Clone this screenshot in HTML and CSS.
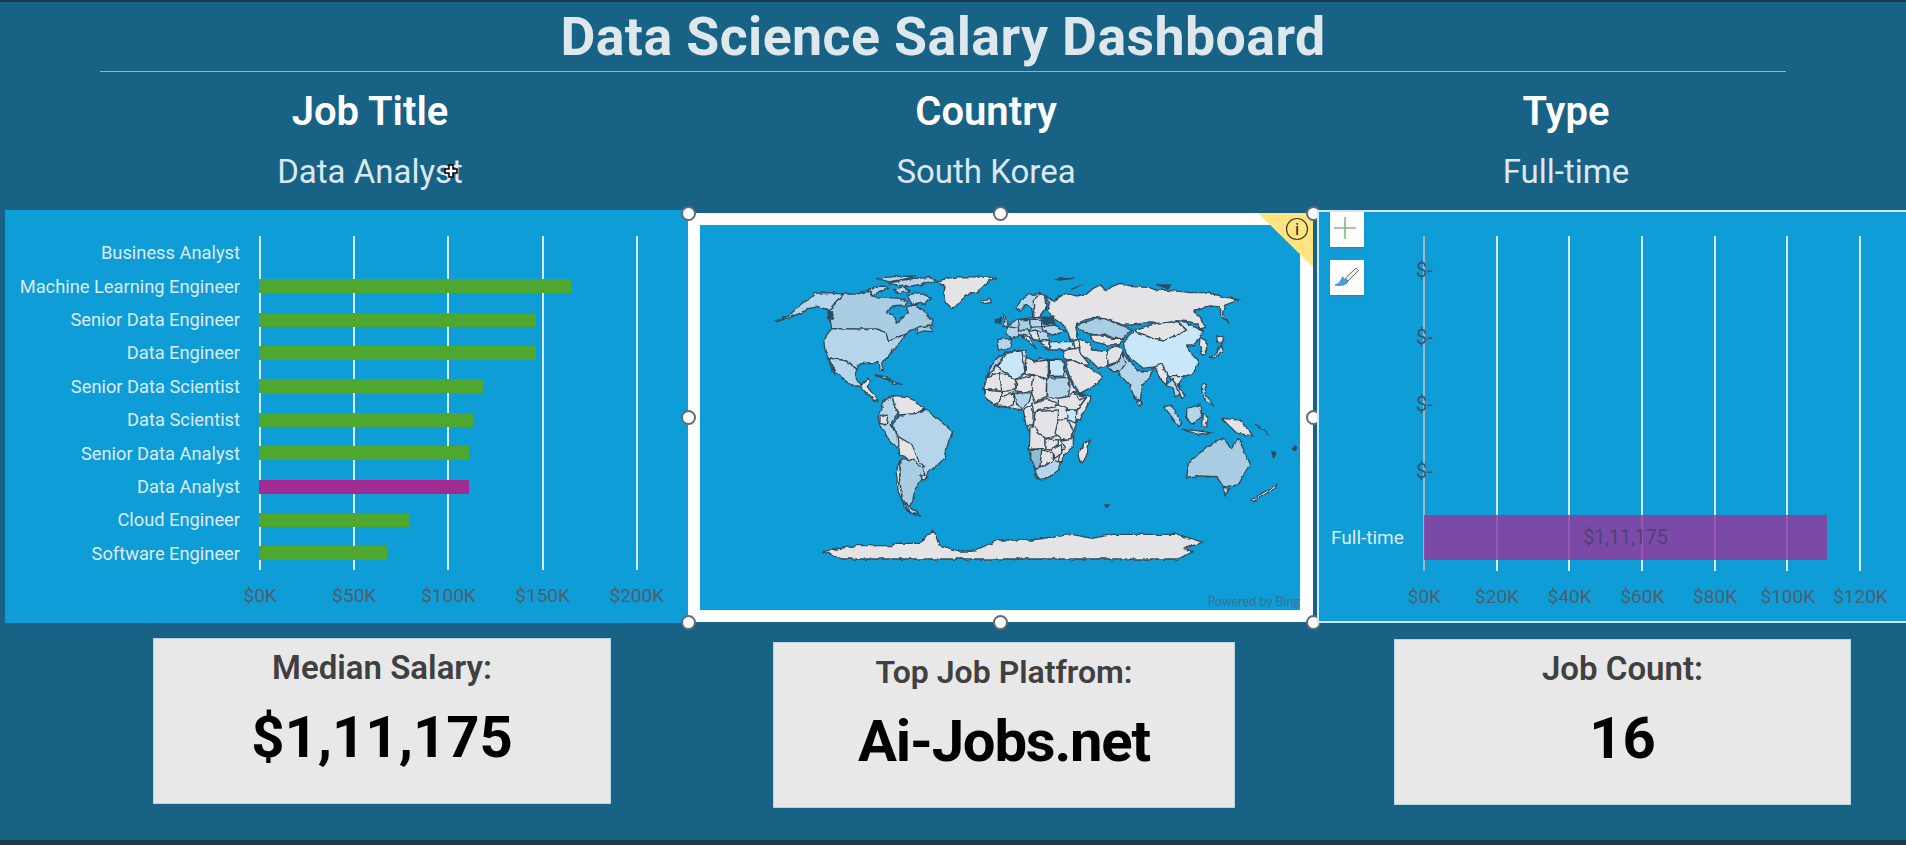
FILE: index.html
```html
<!DOCTYPE html>
<html lang="en">
<head>
    <meta charset="UTF-8">
    <title>Data Science Salary Dashboard</title>
    <link rel="stylesheet" href="styles.css">
</head>
<body>

<div class="page">
    <h1 class="title">Data Science Salary Dashboard</h1>
    <div class="rule"></div>

    <!-- Slicer headings -->
    <div class="filters">
        <div class="filter">
            <div class="filter-name">Job Title</div>
            <div class="filter-value">Data Analyst</div>
        </div>
        <div class="filter">
            <div class="filter-name">Country</div>
            <div class="filter-value">South Korea</div>
        </div>
        <div class="filter">
            <div class="filter-name">Type</div>
            <div class="filter-value">Full-time</div>
        </div>
    </div>

    <!-- Cursor sits over the slicer text -->
    <svg class="cursor" width="14" height="14" viewBox="0 0 14 14">
        <path d="M5 1h4v4h4v4H9v4H5V9H1V5h4z" fill="#fff" stroke="#000" stroke-width="1.5"/>
    </svg>

    <div class="charts">
        <!-- Salary by job title -->
        <div class="panel panel-jobs">
            <div class="chart">
                <div class="labels">
                    <div class="label">Business Analyst</div>
                    <div class="label">Machine Learning Engineer</div>
                    <div class="label">Senior Data Engineer</div>
                    <div class="label">Data Engineer</div>
                    <div class="label">Senior Data Scientist</div>
                    <div class="label">Data Scientist</div>
                    <div class="label">Senior Data Analyst</div>
                    <div class="label">Data Analyst</div>
                    <div class="label">Cloud Engineer</div>
                    <div class="label">Software Engineer</div>
                </div>
                <div class="plot plot-jobs">
                    <div class="row"></div>
                    <div class="row"><div class="bar" style="width: 312px"></div></div>
                    <div class="row"><div class="bar" style="width: 277px"></div></div>
                    <div class="row"><div class="bar" style="width: 277px"></div></div>
                    <div class="row"><div class="bar" style="width: 224px"></div></div>
                    <div class="row"><div class="bar" style="width: 214px"></div></div>
                    <div class="row"><div class="bar" style="width: 210px"></div></div>
                    <div class="row"><div class="bar bar-selected" style="width: 210px"></div></div>
                    <div class="row"><div class="bar" style="width: 150px"></div></div>
                    <div class="row"><div class="bar" style="width: 128px"></div></div>
                </div>
            </div>
            <div class="ticks ticks-jobs">
                <span>$0K</span><span>$50K</span><span>$100K</span><span>$150K</span><span>$200K</span>
            </div>
        </div>

        <!-- Map, selected on the sheet -->
        <div class="map-frame">
            <div class="map-inner">
                <svg class="map" width="600" height="385" viewBox="700 225 600 385">
                    <defs>
                        <filter id="rough" filterUnits="userSpaceOnUse" x="700" y="225" width="600" height="385">
                            <feTurbulence type="fractalNoise" baseFrequency=".16" numOctaves="2" seed="4" result="noise"/>
                            <feDisplacementMap in="SourceGraphic" in2="noise" scale="4" xChannelSelector="R" yChannelSelector="G"/>
                            <feGaussianBlur stdDeviation=".3"/>
                        </filter>
                    </defs>
                    <g filter="url(#rough)">
                    <!-- North America -->
                    <g transform="translate(760 270) scale(.3333)">
                        <polygon class="c1" points="110,115 130,100 150,85 165,70 205,68 248,72 206,122 200,118 175,110 150,115 125,128 90,142 50,155 88,136"/>
                        <polygon class="c2" points="248,72 290,72 325,65 340,80 375,82 420,85 445,95 435,105 395,108 378,128 400,135 412,160 422,145 445,130 440,110 465,105 490,120 515,150 518,165 505,168 475,170 455,180 440,190 385,215 378,190 355,178 215,176 206,122"/>
                        <polygon class="c1" points="215,176 355,178 378,190 385,215 440,190 415,220 400,240 385,262 365,280 370,298 362,300 352,278 330,278 300,282 290,298 270,280 250,270 225,268 205,262 195,240 192,220 200,195"/>
                        <polygon class="c1" points="325,62 345,50 375,48 385,55 350,70 335,78"/>
                        <polygon class="c1" points="385,40 430,30 470,25 510,22 530,35 490,42 440,50"/>
                        <polygon class="c1" points="440,75 480,68 515,85 495,105 480,100 460,105"/>
                        <polygon class="c1" points="400,60 430,50 450,62 420,72"/>
                        <polygon class="c1" points="350,25 400,20 470,18 430,28 385,35"/>
                        <polygon class="c0" points="530,35 560,25 600,20 710,22 680,38 655,65 620,75 600,95 578,118 560,100 550,70 555,50"/>
                        <polygon class="c0" points="662,95 690,88 695,97 670,102"/>
                        <polygon class="c4" points="204,122 214,122 218,148 206,145"/>
                        <polygon class="c2" points="475,170 512,170 520,185 490,183 470,190"/>
                        <polygon class="c1" points="205,262 225,268 250,270 270,280 290,298 285,320 300,345 320,330 328,328 310,352 275,345 245,325 225,300 210,275"/>
                        <polygon class="c1" points="205,265 222,300 225,315 212,290"/>
                        <polygon class="c0" points="300,347 325,325 332,335 322,350 340,375 358,395 340,390 320,370"/>
                        <polygon class="c2" points="345,315 375,320 400,335 370,325"/>
                        <polygon class="c0" points="395,335 425,340 400,343"/>
                    </g>

                    <!-- South America and Antarctica -->
                    <g transform="translate(680 205) scale(.408 .3333)">
                        <polygon class="c1" points="497,590 520,572 525,600 535,625 515,660 540,700 530,730 510,700 490,660 485,640"/>
                        <polygon class="c1" points="540,630 580,620 605,615 640,650 668,680 655,720 650,760 610,800 600,825 590,790 570,750 535,695 520,660"/>
                        <polygon class="c0" points="520,572 560,575 600,610 580,625 540,630 525,600"/>
                        <polygon class="c0" points="535,695 570,720 585,770 600,785 590,785 550,755 538,750"/>
                        <polygon class="c2" points="542,760 570,765 595,790 600,810 575,855 570,890 560,905 590,930 565,925 545,880 538,830"/>
                        <polygon class="c0" points="540,760 538,830 545,880 565,925 580,935 555,915 535,860 530,800"/>
                        <polygon class="c0" points="590,808 608,815 595,828"/>
                        <polygon class="c0" points="490,635 510,630 505,660 490,655"/>
                        <polygon class="c0" points="350,1040 430,1022 520,1022 528,1015 590,1015 605,990 622,975 635,1020 680,1038 720,1038 780,1005 860,1005 960,988 1010,1000 1060,988 1220,988 1282,1012 1235,1030 1258,1040 1220,1062 395,1062"/>
                    </g>

                    <!-- Russia and Asia -->
                    <g transform="translate(1040 270) scale(.3333)">
                        <polygon class="c0" points="15,75 40,95 60,80 85,72 105,78 140,72 160,55 180,45 200,62 215,50 240,40 280,50 320,52 350,60 400,62 450,68 490,68 520,72 560,82 600,90 575,98 555,105 548,125 565,160 548,140 535,110 510,108 490,112 462,125 480,140 497,175 480,180 470,160 445,155 410,152 370,162 320,158 275,165 250,165 190,145 160,142 110,160 108,175 115,205 90,210 85,190 70,165 40,145 20,120 30,100"/>
                        <polygon class="c2" points="110,165 160,148 190,145 240,165 275,180 250,205 220,205 190,190 165,195 145,190 115,175"/>
                        <polygon class="c0" points="150,195 190,195 220,208 250,208 235,225 200,225 160,215"/>
                        <polygon class="c0" points="115,205 150,222 155,240 200,245 205,285 175,295 150,270 120,250"/>
                        <polygon class="c3" points="28,215 100,215 105,235 60,240 30,240"/>
                        <polygon class="c0" points="100,215 115,205 120,235 105,235"/>
                        <polygon class="c0" points="70,240 115,235 125,255 150,285 130,285 95,268 75,270"/>
                        <polygon class="c0" points="75,275 95,270 130,285 160,300 190,320 165,345 120,370 100,340 85,310"/>
                        <polygon class="c0" points="200,240 235,225 250,245 235,275 205,285"/>
                        <polygon class="c2" points="205,290 232,278 250,250 262,278 245,305 215,305"/>
                        <polygon class="c1" points="247,250 268,268 290,300 325,305 345,290 330,320 305,345 298,392 285,385 268,345 245,320 235,310 258,280"/>
                        <polygon class="c0" points="285,178 350,160 410,155 440,180 415,195 375,210 340,205 290,190"/>
                        <polygon class="c3" points="250,220 285,178 290,190 340,205 375,210 415,195 440,180 410,152 440,160 490,185 480,205 460,225 440,225 455,250 475,280 460,310 430,320 390,320 350,290 310,295 260,255"/>
                        <polygon class="c0" points="480,205 498,215 500,250 488,252 478,225"/>
                        <polygon class="c1" points="505,265 530,250 540,225 548,245 525,262"/>
                        <polygon class="c0" points="530,198 552,205 545,222 532,215"/>
                        <polygon class="c0" points="345,290 365,282 385,320 378,345 360,325"/>
                        <polygon class="c1" points="378,345 410,315 425,370 405,380 400,355"/>
                        <polygon class="c0" points="390,320 430,320 415,345 435,380 425,385 410,345"/>
                        <polygon class="c1" points="372,410 395,405 425,462 415,470 395,440"/>
                        <polygon class="c0" points="425,478 470,482 520,490 470,492"/>
                        <polygon class="c1" points="440,415 480,405 485,440 460,462 440,445"/>
                        <polygon class="c0" points="490,430 505,445 498,470 488,472"/>
                        <polygon class="c1" points="485,342 497,345 495,370 520,405 497,392 485,365"/>
                        <polygon class="c0" points="545,445 600,450 640,498 595,490 570,470"/>
                        <polygon class="c2" points="440,625 445,580 500,530 550,505 575,535 595,505 630,580 595,645 550,650 530,620 480,618"/>
                        <polygon class="c1" points="548,652 570,655 555,675"/>
                        <polygon class="c0" points="630,692 712,642 705,655 640,695"/>
                        <polygon class="c1" points="292,392 305,395 302,408 295,405"/>
                        <polygon class="c0" points="90,60 128,42 100,56"/>
                        <polygon class="c4" points="645,462 692,495 660,472"/>
                        <polygon class="c4" points="695,545 708,550 700,560"/>
                        <polygon class="c4" points="758,538 772,530 765,542"/>
                        <polygon class="c4" points="45,27 100,25 60,30"/>
                        <polygon class="c4" points="350,45 395,45 385,55"/>
                        <polygon class="c4" points="195,705 208,705 200,712"/>
                    </g>

                    <!-- Europe and Africa -->
                    <g transform="translate(990 290) scale(.3333)">
                        <polygon class="c0" points="20,205 48,188 95,180 108,185 105,200 135,213 150,205 175,208 218,212 225,240 245,280 262,312 275,320 305,318 285,360 262,395 252,420 250,465 225,490 215,518 190,550 150,568 140,565 132,530 115,478 122,430 110,405 105,375 95,360 50,352 15,348 0,335 -15,322 -20,300 -10,262"/>
                        <polygon class="c2" points="20,205 48,190 50,205 20,225 -10,262 0,235"/>
                        <polygon class="c3" points="50,190 95,182 100,205 105,250 80,268 65,262 22,228"/>
                        <polygon class="c0" points="-10,262 28,245 50,262 35,300 -18,300"/>
                        <polygon class="c0" points="28,245 65,262 80,270 75,300 35,305 35,300"/>
                        <polygon class="c0" points="108,205 135,215 175,210 175,268 130,255 105,250"/>
                        <polygon class="c3" points="178,210 218,212 225,258 178,260"/>
                        <polygon class="c1" points="170,265 235,262 240,290 235,320 205,325 170,320"/>
                        <polygon class="c0" points="80,268 130,255 130,300 100,310 78,305"/>
                        <polygon class="c0" points="132,255 170,268 168,320 135,335 125,310"/>
                        <polygon class="c0" points="-18,300 35,305 35,325 15,345 0,335 -15,322"/>
                        <polygon class="c0" points="35,320 72,308 70,345 50,350 20,348"/>
                        <polygon class="c1" points="72,310 125,308 118,335 95,358 80,340"/>
                        <polygon class="c0" points="125,340 170,325 205,345 175,355 130,365"/>
                        <polygon class="c0" points="205,325 235,320 250,305 270,330 290,320 262,360 235,360 205,345"/>
                        <polygon class="c0" points="250,305 305,320 270,390 255,395 262,360 290,322"/>
                        <polygon class="c0" points="100,360 128,345 130,405 108,405"/>
                        <polygon class="c0" points="135,365 205,360 205,395 195,440 165,445 130,410"/>
                        <polygon class="c3" points="228,360 260,362 258,400 232,388"/>
                        <polygon class="c0" points="205,390 232,388 250,420 245,450 210,445 195,430"/>
                        <polygon class="c0" points="120,412 130,410 165,445 165,475 118,478"/>
                        <polygon class="c0" points="165,445 205,450 205,465 185,480 165,478"/>
                        <polygon class="c0" points="210,450 250,445 250,470 225,490 215,515 205,515 210,490 225,470"/>
                        <polygon class="c5" points="115,478 155,478 155,500 150,535 135,535"/>
                        <polygon class="c0" points="155,480 190,490 190,510 170,525 150,530"/>
                        <polygon class="c0" points="185,478 215,468 215,490 195,505"/>
                        <polygon class="c1" points="135,540 155,530 170,525 190,510 210,518 205,540 175,565 145,568"/>
                        <polygon class="c0" points="298,448 292,490 272,518 265,500 272,475"/>

                        <polygon class="c1" points="50,112 85,88 155,80 190,85 195,105 225,125 190,135 165,128 180,150 175,180 150,155 130,145 115,140 90,135"/>
                        <polygon class="c1" points="40,70 55,100 60,108 38,110 42,90"/>
                        <polygon class="c4" points="15,90 32,85 30,100 18,100"/>
                        <polygon class="c1" points="75,55 110,15 150,10 165,25 168,50 150,80 130,85 125,55 105,45 90,65"/>
                        <polygon class="c0" points="130,30 150,12 165,25 168,50 150,78 132,82"/>
                        <polygon class="c1" points="20,148 65,145 60,170 40,180 25,180"/>
                        <polygon class="c1" points="55,110 85,115 85,140 65,145 50,130"/>
                        <polygon class="c2" points="85,90 120,88 120,120 90,120"/>
                        <polygon class="c1" points="120,88 155,88 155,110 120,112"/>
                        <polygon class="c4" points="155,80 190,85 190,100 160,102"/>
                        <polygon class="c1" points="155,110 195,105 225,125 190,135 160,125"/>
                        <polygon class="c0" points="95,135 115,140 140,175 120,160"/>
                        <polygon class="c0" points="115,125 140,120 150,155 130,145"/>
                        <polygon class="c1" points="140,122 165,125 180,150 165,152 150,155"/>
                        <polygon class="c0" points="150,155 178,150 175,180"/>
                    </g>
                    </g>
                </svg>
            </div>
            <div class="bing">Powered by Bing</div>
            <svg class="info" width="55" height="54" viewBox="0 0 55 54">
                <polygon points="0,0 55,0 55,54" fill="#ffe581"/>
                <circle cx="39" cy="16" r="10.500" fill="none" stroke="#3c3a26" stroke-width="1.200"/>
                <text x="39" y="22" text-anchor="middle" font-size="17" font-family="Roboto" fill="#222">i</text>
            </svg>
            <span class="handle h-tl"></span><span class="handle h-tc"></span><span class="handle h-tr"></span>
            <span class="handle h-ml"></span><span class="handle h-mr"></span>
            <span class="handle h-bl"></span><span class="handle h-bc"></span><span class="handle h-br"></span>
        </div>

        <!-- Salary by type -->
        <div class="panel panel-type">
            <div class="chart-btn btn-plus">
                <svg width="34" height="35" viewBox="0 0 34 35"><path d="M15 5v22M4 16h22" stroke="#7fb98c" stroke-width="1.600" fill="none"/></svg>
            </div>
            <div class="chart-btn btn-brush">
                <svg width="34" height="35" viewBox="0 0 34 35">
                    <path d="M15.500 18 26 8l2.500 2.500L18 21z" fill="#f2f2f2" stroke="#666" stroke-width="1"/>
                    <path d="M12.500 17l5.500 5c-2 3-8 4-13 3 4-1 6-4 7.500-8z" fill="#4b9fe3" stroke="#2f74b5" stroke-width=".8"/>
                </svg>
            </div>
            <div class="chart">
                <div class="labels labels-type">
                    <div class="label"></div>
                    <div class="label"></div>
                    <div class="label"></div>
                    <div class="label"></div>
                    <div class="label">Full-time</div>
                </div>
                <div class="plot plot-type">
                    <div class="row row-type"><span class="blank">$-</span></div>
                    <div class="row row-type"><span class="blank">$-</span></div>
                    <div class="row row-type"><span class="blank">$-</span></div>
                    <div class="row row-type"><span class="blank">$-</span></div>
                    <div class="row row-type"><div class="bar-type" style="width: 403px">$1,11,175</div></div>
                </div>
            </div>
            <div class="ticks ticks-type">
                <span>$0K</span><span>$20K</span><span>$40K</span><span>$60K</span><span>$80K</span><span>$100K</span><span>$120K</span>
            </div>
        </div>
    </div>

    <!-- KPI cards -->
    <div class="kpis">
        <div class="kpi kpi-salary">
            <div class="kpi-label">Median Salary:</div>
            <div class="kpi-value">$1,11,175</div>
        </div>
        <div class="kpi kpi-platform">
            <div class="kpi-label">Top Job Platfrom:</div>
            <div class="kpi-value">Ai-Jobs.net</div>
        </div>
        <div class="kpi kpi-count">
            <div class="kpi-label">Job Count:</div>
            <div class="kpi-value">16</div>
        </div>
    </div>
</div>

</body>
</html>
```

FILE: styles.css
```css
body {
    margin: 0;
    background-color: #1b3b49;
    font-family: Roboto, Arial, sans-serif;
    height: 845px;
    overflow: hidden;
}

.page {
    position: relative;
    height: 838px;
    background-color: #186285;
    border-top: 2px solid #17384a;
}

.title {
    margin: 0;
    height: 69px;
    padding-right: 20px;
    line-height: 70px;
    text-align: center;
    font-size: 53.700px;
    font-weight: 700;
    letter-spacing: .4px;
    color: #dde7ec;
}

.rule {
    height: 1px;
    margin: 0 120px 0 100px;
    background-color: #8fb5c9;
}

.filters {
    display: grid;
    grid-template-columns: 740px 492px 668px;
    margin-top: 15px;
    text-align: center;
}

.filter-name {
    font-size: 40px;
    font-weight: 600;
    line-height: 50px;
    color: #fff;
}

.filter-value {
    margin-top: 11px;
    font-size: 33px;
    font-weight: 400;
    line-height: 48px;
    color: #d9e8f1;
}

.cursor {
    position: absolute;
    left: 444px;
    top: 162px;
}

.charts {
    display: flex;
    margin-top: 14px;
    padding-left: 5px;
}

.panel {
    position: relative;
    height: 413px;
    background-color: #0f9dd8;
    box-sizing: border-box;
    padding-top: 26px;
}

.panel-jobs {
    width: 683px;
}

.panel-type {
    flex: 1;
    margin-left: 4px;
    border: 2px solid #cfe8f5;
    border-right: none;
    padding-top: 24px;
}

.chart {
    display: flex;
}

.labels {
    width: 235px;
    margin-right: 19px;
    display: flex;
    flex-direction: column;
}

.labels-type {
    width: 92px;
    margin-right: 0;
    padding-left: 12px;
}

.label {
    flex: 1;
    display: flex;
    align-items: center;
    justify-content: flex-end;
    font-size: 18.300px;
    color: #dcecf5;
    white-space: nowrap;
}

.labels-type .label {
    justify-content: flex-start;
    font-size: 19px;
}

.plot {
    display: flex;
    flex-direction: column;
    height: 334px;
}

.plot-jobs {
    width: 400px;
    background-image: repeating-linear-gradient(to right, #d6edf8 0, #d6edf8 2px, transparent 2px, transparent 94.200px);
}

.plot-type {
    width: 440px;
    height: 335px;
    background-image:
        linear-gradient(#9fb6c4, #9fb6c4),
        repeating-linear-gradient(to right, #d6edf8 0, #d6edf8 2px, transparent 2px, transparent 72.700px);
    background-size: 2px 100%, 100% 100%;
    background-repeat: no-repeat;
}

.row {
    flex: 1;
    display: flex;
    align-items: center;
}

.bar {
    height: 14px;
    background-color: #4ea72e;
}

.bar-selected {
    background-color: #a02b93;
}

.bar-type {
    height: 45px;
    margin-left: 1px;
    background-color: rgba(142, 60, 160, .85);
    display: flex;
    align-items: center;
    justify-content: center;
    font-size: 19.500px;
    color: #4b4470;
}

.blank {
    margin-left: -7px;
    font-size: 20px;
    color: #3f5266;
}

.ticks {
    display: flex;
    margin-top: 14px;
    font-size: 19px;
    color: #4f5d6d;
}

.ticks span {
    text-align: center;
    line-height: 24px;
}

.ticks-jobs {
    padding-left: 208px;
}

.ticks-jobs span {
    width: 94.200px;
}

.ticks-type {
    padding-left: 69px;
}

.ticks-type span {
    width: 72.700px;
}

.chart-btn {
    position: absolute;
    left: 11px;
    width: 34px;
    height: 35px;
    background-color: #fff;
    box-shadow: 0 1px 1px #5d7484;
}

.chart-btn svg {
    display: block;
}

.btn-plus {
    top: 0;
}

.btn-brush {
    top: 48px;
}

.map-frame {
    position: relative;
    width: 625px;
    height: 409px;
    margin-top: 3px;
    box-sizing: border-box;
    padding: 12px 13px 12px 12px;
    background-color: #fff;
}

.map-inner {
    width: 600px;
    height: 385px;
    background-color: #0f9dd8;
    box-shadow: 0 0 1px #bfe4f5;
}

.map {
    display: block;
}

.map polygon {
    vector-effect: non-scaling-stroke;
    stroke: #33495a;
    stroke-width: 1.300px;
    stroke-linejoin: round;
}

.c0 { fill: #e4e4e6; }
.c1 { fill: #b5d6ea; }
.c2 { fill: #a9cde2; }
.c3 { fill: #c8e7f8; }
.c4 { fill: #1c5270; }
.c5 { fill: #8fbbd4; }

.bing {
    position: absolute;
    right: 13px;
    bottom: 13px;
    font-family: Lato, sans-serif;
    font-size: 12.500px;
    color: #3f6f8e;
}

.info {
    position: absolute;
    right: 0;
    top: 0;
}

.handle {
    position: absolute;
    width: 11px;
    height: 11px;
    margin: -7.500px 0 0 -7.500px;
    border: 2px solid #5f6b73;
    border-radius: 50%;
    background-color: #fff;
}

.h-tl { left: 0; top: 0; }
.h-tc { left: 50%; top: 0; }
.h-tr { left: 100%; top: 0; }
.h-ml { left: 0; top: 50%; }
.h-mr { left: 100%; top: 50%; }
.h-bl { left: 0; top: 100%; }
.h-bc { left: 50%; top: 100%; }
.h-br { left: 100%; top: 100%; }

.kpis {
    display: flex;
    align-items: flex-start;
    margin-top: 15px;
    padding-left: 153px;
}

.kpi {
    height: 166px;
    box-sizing: border-box;
    padding-top: 9px;
    background-color: #e8e8e8;
    border: 1px solid #b9d3e0;
    text-align: center;
}

.kpi-salary {
    width: 458px;
}

.kpi-platform {
    width: 462px;
    margin-left: 162px;
    margin-top: 4px;
}

.kpi-platform .kpi-value {
    letter-spacing: -1.200px;
}

.kpi-count {
    width: 457px;
    margin-left: 159px;
    margin-top: 1px;
}

.kpi-label {
    font-size: 33px;
    font-weight: 600;
    line-height: 40px;
    color: #404040;
}

.kpi-platform .kpi-label {
    font-size: 32px;
}

.kpi-value {
    margin-top: 9px;
    font-size: 58px;
    font-weight: 700;
    line-height: 80px;
    color: #000;
}
```
